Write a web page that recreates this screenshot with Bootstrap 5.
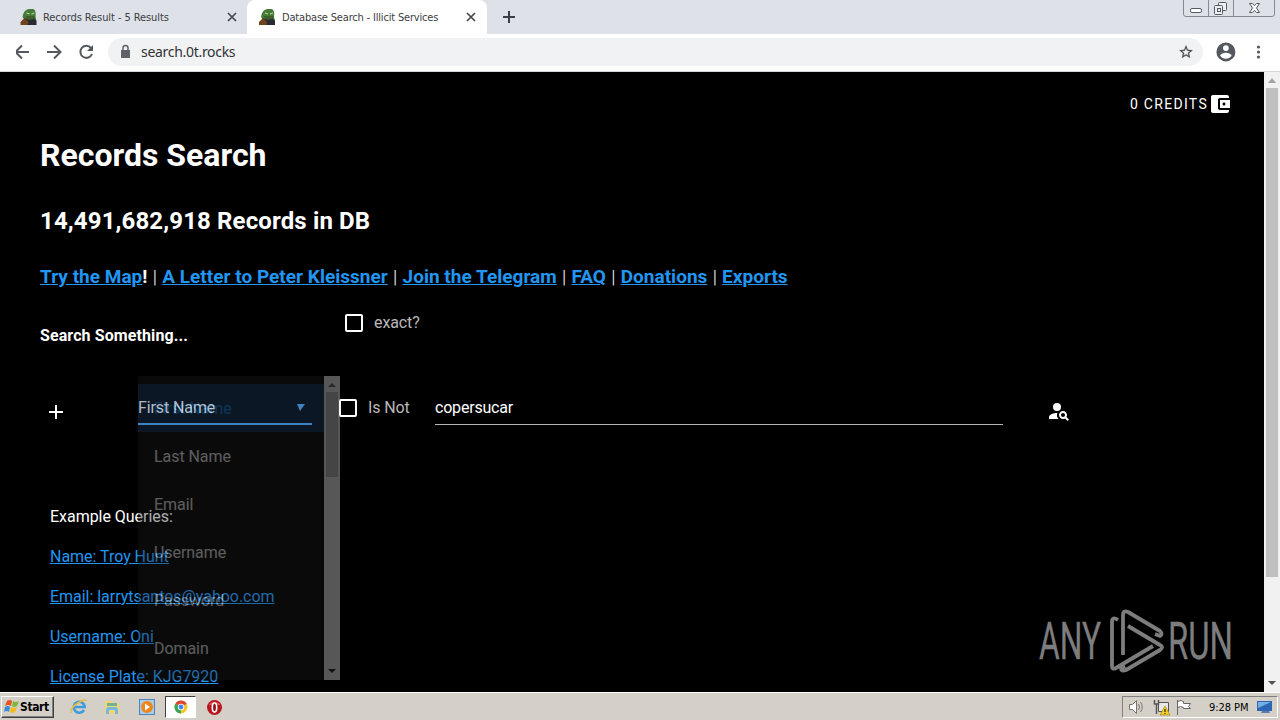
<!DOCTYPE html>
<html lang="en">
<head>
    <meta charset="UTF-8">
    <meta name="viewport" content="width=device-width, initial-scale=1.0">
    <title>Database Search - Illicit Services</title>
    <link href="https://cdn.jsdelivr.net/npm/bootstrap@5.3.0/dist/css/bootstrap.min.css" rel="stylesheet">
    <style>
        body {
            height: 720px;
            overflow: hidden;
            background: #000;
            font-family: Roboto, sans-serif;
            font-size: 16px;
        }

        svg {
            display: block;
            flex: none;
        }

        /* Browser tabs */
        .tab-strip {
            height: 34px;
            background: #dee1e8;
            font: 11px/35px "DejaVu Sans Condensed", "DejaVu Sans", sans-serif;
            color: #3c4043;
        }

        .browser-tab {
            width: 247px;
            padding: 0 9px 0 20px;
        }

        .browser-tab.current {
            width: 240px;
            padding: 0 10px 0 12px;
            background: #fff;
            border-radius: 8px 8px 0 0;
        }

        .tab-title {
            margin-left: 6px;
            letter-spacing: -0.08px;
            white-space: nowrap;
        }

        .current .tab-title {
            margin-left: 7px;
            letter-spacing: -0.18px;
        }

        /* Address bar */
        .toolbar {
            height: 38px;
            padding-bottom: 2px;
            background: #fff;
            border-bottom: 1px solid #d5d7da;
        }

        .address {
            width: 1095px;
            height: 28px;
            margin-left: 12px;
            padding: 0 9px 0 10px;
            border-radius: 14px;
            background: #f0f2f4;
            color: #333;
            font: 14px "Noto Sans", sans-serif;
        }

        .address-text {
            letter-spacing: -0.3px;
        }

        /* Page */
        .viewport {
            height: 620px;
        }

        .search-page {
            width: 1264px;
            overflow: hidden;
            color: #fff;
        }

        .credits {
            height: 32px;
            margin: 16px 32px 0 0;
            font-size: 14px;
            letter-spacing: 1.3px;
        }

        .search-page h1 {
            height: 42px;
            margin: 14px 0 0 40px;
            font-size: 32px;
            font-weight: 700;
            line-height: 42px;
        }

        .search-page h2 {
            height: 30px;
            margin: 30px 0 0 40px;
            font-size: 24px;
            font-weight: 700;
            line-height: 30px;
            letter-spacing: 0.13px;
        }

        .search-page a {
            color: #2196f3;
        }

        .site-links {
            height: 24px;
            margin: 29px 0 0 40px;
            font-size: 19px;
            font-weight: 300;
            line-height: 24px;
            letter-spacing: 0.02px;
            white-space: nowrap;
        }

        .divider {
            margin: 0 .6px;
        }

        .site-links a,
        .site-links b {
            font-weight: 700;
        }

        .prompt-row {
            height: 48px;
            margin: 10px 0 0 40px;
        }

        .prompt {
            width: 305px;
            padding-top: 25px;
            font-weight: 700;
            line-height: 24px;
            letter-spacing: 0.1px;
        }

        .check-box {
            width: 18px;
            height: 18px;
            border: 2px solid #fff;
            border-radius: 2px;
        }

        .check-label {
            margin-left: 11px;
            color: #b9b9b9;
            letter-spacing: -0.1px;
        }

        .query-row {
            height: 36px;
            margin: 43px 0 0 48px;
        }

        .plus-icon {
            margin-top: 14px;
        }

        .field-select {
            width: 174px;
            height: 35px;
            margin-left: 74px;
            padding-top: 2px;
            border-bottom: 2px solid #52a9f5;
            letter-spacing: -0.1px;
        }

        .is-not {
            width: 96px;
            margin-left: 27px;
        }

        .field-value {
            width: 568px;
            height: 35px;
            padding-top: 2px;
            border-bottom: 1px solid #b5b5b5;
            letter-spacing: -0.2px;
        }

        .go-icon {
            margin: 9px 0 0 44px;
        }

        .examples {
            margin: 79px 0 0 50px;
            line-height: 24px;
            letter-spacing: -0.03px;
        }

        .examples p {
            margin: 0 0 16px;
        }

        /* Menu fading in over the page */
        .field-menu {
            position: absolute;
            left: 138px;
            top: 304px;
            width: 202px;
            height: 304px;
            background: #1e1e1e;
            opacity: .36;
        }

        .menu-item {
            height: 48px;
            padding-left: 16px;
            line-height: 50px;
            letter-spacing: -0.06px;
        }

        .menu-item.selected {
            background: #1f4064;
            color: #2196f3;
        }

        .scroll-track {
            width: 16px;
            background: #f1f1f1;
        }

        .scroll-thumb {
            width: 12px;
            background: #bfbfbf;
        }

        /* Recording watermark */
        .watermark {
            position: absolute;
            left: 1036px;
            top: 534px;
        }

        /* Taskbar */
        .taskbar {
            height: 28px;
            padding: 2px 2px 1px 1px;
            border-top: 1px solid #fff;
            background: #d4d0c8;
            color: #000;
            font: 11px "DejaVu Sans Condensed", "DejaVu Sans", sans-serif;
        }

        .raised {
            border: 1px solid;
            border-color: #fff #404040 #404040 #fff;
            box-shadow: inset -1px -1px #808080;
        }

        .start-button {
            width: 53px;
            height: 22px;
            padding-left: 2px;
            font-size: 12px;
            font-weight: bold;
            letter-spacing: -0.4px;
        }

        .launch {
            margin: 0 9px 0 16px;
        }

        .sunken {
            border: 1px solid;
            border-color: #808080 #fff #fff #808080;
        }

        .task-current {
            width: 31px;
            height: 22px;
            background: #fff;
            border-color: #404040 #fff #fff #404040;
        }

        .tray {
            width: 156px;
            height: 22px;
        }

        .clock {
            letter-spacing: -0.05px;
        }
    </style>
</head>
<body class="d-flex flex-column">
    <svg width="0" height="0" class="position-absolute">
        <symbol id="frog" viewBox="0 0 16 16">
            <path d="M2 8Q3 1 8 0h5q3 2 2 8l1 4H5z" fill="#457a38"/>
            <path d="M5 7l9 0 1 3-8 2z" fill="#35612d"/>
            <path d="M4 9l4 2 6-1 2 2v4H3z" fill="#292a32"/>
            <path d="M0 13l4-4 4 4-1 3H0z" fill="#70431f"/>
            <path d="M6 4l3 1M11 5l3-1" stroke="#b5d59a" stroke-width="1.2"/>
            <path d="M7 8.500h6" stroke="#5e552f"/>
        </symbol>
        <symbol id="cross" viewBox="0 0 10 10">
            <path d="M1 1l8 8M9 1L1 9" stroke="#45484c" stroke-width="1.7"/>
        </symbol>
    </svg>

    <!-- Tabs -->
    <div class="tab-strip d-flex">
        <div class="browser-tab d-flex align-items-center">
            <svg width="17" height="16"><use href="#frog"/></svg>
            <span class="tab-title">Records Result - 5 Results</span>
            <svg class="ms-auto" width="12" height="10"><use href="#cross"/></svg>
        </div>
        <div class="browser-tab current d-flex align-items-center">
            <svg width="16" height="16"><use href="#frog"/></svg>
            <span class="tab-title">Database Search - Illicit Services</span>
            <svg class="ms-auto" width="12" height="10"><use href="#cross"/></svg>
        </div>
        <svg class="ms-3 mt-2" width="13" height="17" viewBox="0 0 13 17"><path d="M6 3v12M0 9h12" stroke="#3b3e42" stroke-width="2"/></svg>
        <svg class="ms-auto me-1" width="106" height="18" viewBox="0 0 106 18" fill="none" stroke="#858994">
            <path d="M.5 0v14q0 2.500 2.500 2.500h86q2.500 0 2.500-2.500V0M25.500 0v16M50.500 0v16" transform="translate(13)"/>
            <g stroke="#555b66">
                <rect x="20.500" y="8.500" width="11" height="4" rx="1.500" fill="#fff"/>
                <rect x="48.500" y="2.500" width="8" height="8" rx="1" fill="#eee"/>
                <rect x="44.500" y="5.500" width="8" height="9" rx="1" fill="#eee"/>
                <rect x="47.500" y="8.500" width="3" height="3"/>
                <path d="M79.500 3.500h3l2 2 2-2h3l-3 4.500 3 4.500h-3l-2-2-2 2h-3l3-4.500z" fill="#f5f5f5"/>
            </g>
        </svg>
    </div>

    <!-- Address bar -->
    <div class="toolbar d-flex align-items-center">
        <svg class="ms-3" width="80" height="20" viewBox="0 0 80 20" fill="none" stroke="#55585c" stroke-width="2">
            <path d="M13 10H0M6 3.500L-.5 10 6 16.500M31 10h14M38 3.500l6.500 6.500-6.500 6.500"/>
            <path d="M75 6A6 6 0 1 0 76 12"/>
            <path d="M77 3v6h-6z" fill="#55585c" stroke="none"/>
        </svg>
        <div class="address d-flex align-items-center">
            <svg width="15" height="16" viewBox="0 0 15 16"><path d="M3 6h9v8H3z" fill="#5f6368"/><path d="M5 7V4a2.500 2.500 0 0 1 5 0v3" fill="none" stroke="#5f6368" stroke-width="1.500"/></svg>
            <span class="address-text ms-2">search.0t.rocks</span>
            <svg class="ms-auto" width="16" height="16" viewBox="0 0 24 24"><path d="M22 9.240l-7.190-.62L12 2 9.190 8.630 2 9.240l5.460 4.730L5.820 21 12 17.270 18.180 21l-1.630-7.030L22 9.240zM12 15.400l-3.760 2.270 1-4.280-3.320-2.880 4.380-.38L12 6.100l1.710 4.040 4.380.38-3.320 2.880 1 4.280L12 15.400z" fill="#484b50" stroke="#484b50" stroke-width=".3"/></svg>
        </div>
        <svg class="ms-2" width="60" height="24" viewBox="0 0 60 24" fill="#54585d">
            <path d="M12 2a10 10 0 1 0 0 20 10 10 0 0 0 0-20zm0 3a3 3 0 1 1 0 6 3 3 0 0 1 0-6zm0 14.200a7.200 7.200 0 0 1-6-3.220c.03-1.990 4-3.080 6-3.080s5.970 1.090 6 3.080a7.200 7.200 0 0 1-6 3.220z" transform="translate(3.500 .5) scale(.95)"/>
            <circle cx="47.500" cy="7" r="1.600"/><circle cx="47.500" cy="12" r="1.600"/><circle cx="47.500" cy="17" r="1.600"/>
        </svg>
    </div>

    <div class="viewport d-flex position-relative">
        <main class="search-page">
            <div class="credits d-flex align-items-center justify-content-end">
                <span>0 CREDITS</span>
                <svg width="24" height="24" viewBox="0 0 24 24" fill="#fff"><path d="M21 18v1c0 1.100-.9 2-2 2H5c-1.110 0-2-.9-2-2V5c0-1.100.89-2 2-2h14c1.100 0 2 .9 2 2v1h-9c-1.110 0-2 .9-2 2v8c0 1.100.89 2 2 2h9zm-9-2h10V8H12v8zm4-2.500c-.83 0-1.500-.67-1.500-1.500s.67-1.500 1.500-1.500 1.500.67 1.500 1.500-.67 1.500-1.500 1.500z"/></svg>
            </div>
            <h1>Records Search</h1>
            <h2>14,491,682,918 Records in DB</h2>
            <div class="site-links">
                <a href="#">Try the Map</a><b>!</b>
                <span class="divider">|</span>
                <a href="#">A Letter to Peter Kleissner</a>
                <span class="divider">|</span>
                <a href="#">Join the Telegram</a>
                <span class="divider">|</span>
                <a href="#">FAQ</a>
                <span class="divider">|</span>
                <a href="#">Donations</a>
                <span class="divider">|</span>
                <a href="#">Exports</a>
            </div>

            <div class="prompt-row d-flex">
                <div class="prompt">Search Something...</div>
                <div class="d-flex align-items-center">
                    <span class="check-box"></span>
                    <span class="check-label">exact?</span>
                </div>
            </div>

            <div class="query-row d-flex">
                <svg class="plus-icon" width="16" height="16" viewBox="0 0 16 16"><path d="M8 1v14M1 8h14" stroke="#fff" stroke-width="2"/></svg>
                <div class="field-select d-flex align-items-center">
                    <span>First Name</span>
                    <svg class="ms-auto me-1" width="12" height="12" viewBox="0 0 12 12"><path d="M1 2h8L4 9z" fill="#52a9f5"/></svg>
                </div>
                <div class="is-not d-flex align-items-center">
                    <span class="check-box"></span>
                    <span class="check-label">Is Not</span>
                </div>
                <div class="field-value d-flex align-items-center">copersucar</div>
                <svg class="go-icon" width="24" height="24" viewBox="0 0 24 24" fill="#fff"><circle cx="10" cy="8" r="4"/><path d="M10.350 14.010C7.620 13.910 2 15.270 2 18v2h9.540c-2.470-2.760-1.230-5.890-1.190-5.990zM19.430 18.020c.36-.59.57-1.280.57-2.020 0-2.210-1.790-4-4-4s-4 1.790-4 4 1.790 4 4 4c.74 0 1.430-.22 2.020-.57L20.590 22 22 20.590l-2.570-2.570zM16 18c-1.100 0-2-.9-2-2s.9-2 2-2 2 .9 2 2-.9 2-2 2z"/></svg>
            </div>

            <div class="examples">
                <p>Example Queries:</p>
                <p><a href="#">Name: Troy Hunt</a></p>
                <p><a href="#">Email: larrytsantos@yahoo.com</a></p>
                <p><a href="#">Username: Oni</a></p>
                <p><a href="#">License Plate: KJG7920</a></p>
            </div>
        </main>

        <!-- Page scrollbar -->
        <div class="scroll-track d-flex flex-column align-items-center">
            <svg width="16" height="16" viewBox="0 0 16 16"><path d="M4 11l4-5 4 5z" fill="#a3a3a3"/></svg>
            <div class="scroll-thumb" style="height: 489px"></div>
            <svg class="mt-auto" width="16" height="17" viewBox="0 0 16 17"><path d="M4 6l4 4 4-4z" fill="#505050"/></svg>
        </div>

        <!-- Field menu -->
        <div class="field-menu d-flex text-white">
            <div class="flex-grow-1 pt-2 overflow-hidden">
                <div class="menu-item selected">First Name</div>
                <div class="menu-item">Last Name</div>
                <div class="menu-item">Email</div>
                <div class="menu-item">Username</div>
                <div class="menu-item">Password</div>
                <div class="menu-item">Domain</div>
            </div>
            <div class="scroll-track d-flex flex-column align-items-center">
                <svg width="16" height="16" viewBox="0 0 16 16"><path d="M4 11l4-4 4 4z" fill="#707070"/></svg>
                <div class="scroll-thumb" style="height: 85px"></div>
                <svg class="mt-auto" width="16" height="17" viewBox="0 0 16 17"><path d="M4 6l4 4 4-4z" fill="#333"/></svg>
            </div>
        </div>

        <svg class="watermark" width="220" height="70" viewBox="0 0 220 70" fill="#7d7d7d">
            <g font-size="52" stroke="#7d7d7d" stroke-width=".3">
                <text x="3" y="53" textLength="62" lengthAdjust="spacingAndGlyphs">ANY</text>
                <text x="132" y="53" textLength="65" lengthAdjust="spacingAndGlyphs">RUN</text>
            </g>
            <g fill="none" stroke="#7d7d7d" stroke-width="3.800" stroke-linejoin="round">
                <path d="M82 14q-6-4-6 2v44q0 4 4 2l37-22"/>
                <path d="M87 49V9q0-5 5-3l32 19q3 3 0 5l-5-2"/>
                <path d="M92 20l32 19q4 2 0 5L90 64q-5 2-5-2l4-2"/>
            </g>
        </svg>
    </div>

    <!-- Taskbar -->
    <div class="taskbar d-flex align-items-center">
        <div class="start-button raised d-flex align-items-center">
            <svg width="16" height="16" viewBox="0 0 16 16">
                <path d="M3 2q3-2 5 0L7 7Q4 5 1 7z" fill="#e8541e"/>
                <path d="M9 2q3 2 6 0l-2 5q-3 2-5 0z" fill="#7eb83b"/>
                <path d="M1 8q3-2 5 0l-1 5Q3 11 0 13z" fill="#3a8bd6"/>
                <path d="M7 8q3 2 6 0l-2 5q-3 2-5 0z" fill="#f5bb1d"/>
            </svg>
            <span>Start</span>
        </div>
        <svg class="launch" width="86" height="18" viewBox="0 0 86 18">
            <path d="M14 12a5.500 5.500 0 1 1 .7-3H5" fill="none" stroke="#3e9bdc" stroke-width="2.600"/>
            <path d="M1 15Q0 10 8 5t8-2" fill="none" stroke="#e8bd38" stroke-width="1.500"/>
            <path d="M35 3h6l2 2h6v11H35z" fill="#f0d477"/>
            <path d="M37 5h10v3H37z" fill="#6fb48c"/>
            <path d="M36 16v-4q0-3 3-3h6q3 0 3 3v4h-3v-4h-6v4z" fill="#78b8e0"/>
            <rect x="69.500" y="1.500" width="15" height="15" fill="#a9cdec" stroke="#4e83bd"/>
            <circle cx="77" cy="9" r="6" fill="#ef861b"/><path d="M75 5.500l5 3.500-5 3.500z" fill="#fff"/>
        </svg>
        <div class="task-current sunken d-flex align-items-center justify-content-center">
            <svg width="14" height="14" viewBox="0 0 14 14">
                <circle cx="7" cy="7" r="6.500" fill="#f4c628"/>
                <path d="M7 7L1.370 3.750A6.500 6.500 0 0 1 12.630 3.750z" fill="#df4534"/>
                <path d="M7 7v6.500A6.500 6.500 0 0 1 1.370 3.750z" fill="#3ba456"/>
                <circle cx="7" cy="7" r="3.200" fill="#fff"/><circle cx="7" cy="7" r="2.400" fill="#4385ed"/>
            </svg>
        </div>
        <svg class="ms-2" width="20" height="17" viewBox="0 0 20 17"><circle cx="10.500" cy="8.500" r="7.500" fill="#b8161f"/><path d="M4.500 6a6.500 5 0 0 1 12 0z" fill="#df5459"/><ellipse cx="10.500" cy="8.500" rx="2.200" ry="4.500" fill="#8e1016" stroke="#fff" stroke-width="1.600"/></svg>

        <div class="tray sunken d-flex align-items-center ms-auto">
            <svg class="ms-1 me-3" width="66" height="18" viewBox="0 0 66 18">
                <g fill="#fff" stroke="#77746e">
                    <path d="M2.500 6.500h3l4-4v13l-4-4h-3z"/>
                    <path d="M11.500 6q2 3 0 6M13.500 4q3.500 5 0 10" fill="none"/>
                    <path d="M31.500 4.500h10v9h-10z" fill="#e8e8e8" stroke="#555"/>
                    <path d="M27.500 2v4h4V2M29.500 6v10" fill="none" stroke="#555" stroke-width="1.500"/>
                    <path d="M50.500 2v15M50.500 3.500q4-2 6 0v2h7l-2 3 2 2h-7v-1q-3-2-6 0" stroke="#666"/>
                </g>
                <path d="M38 8l5 9H33z" fill="#f6cf23" stroke="#9d7b00" stroke-width=".6"/><path d="M38 11v3m0 1v1" stroke="#000"/>
            </svg>
            <span class="clock">9:28 PM</span>
            <svg class="ms-auto me-1" width="16" height="14" viewBox="0 0 16 14"><path d="M0 1h15v10H0z" fill="#2e65b5"/><path d="M1 2h13L1 8z" fill="#75afe4"/><path d="M5 11h7l1 2H4z" fill="#5a7ca6"/></svg>
        </div>
    </div>

    <script src="https://cdn.jsdelivr.net/npm/bootstrap@5.3.0/dist/js/bootstrap.bundle.min.js"></script>
</body>
</html>
